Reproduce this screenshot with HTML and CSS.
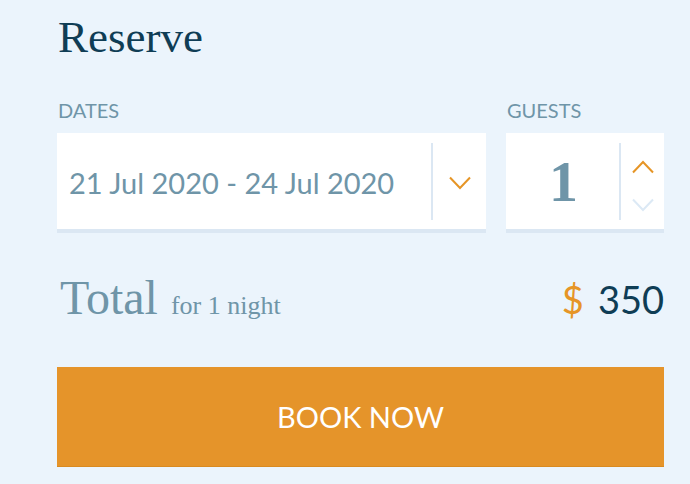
FILE: index.html
```html
<!DOCTYPE html>
<html>
<head>
<meta charset="utf-8">
<link rel="stylesheet" href="styles.css">
</head>
<body>
<div class="card">
  <h1 class="title">Reserve</h1>
  <div class="fields">
    <div class="field dates">
      <div class="label">DATES</div>
      <div class="box">
        <div class="value">21 Jul 2020 - 24 Jul 2020</div>
        <div class="side">
          <svg class="chev" width="22" height="14" viewBox="0 0 22 14"><path d="M1 1.5 L11 12 L21 1.5" fill="none" stroke="#e69526" stroke-width="2"/></svg>
        </div>
      </div>
    </div>
    <div class="field guests">
      <div class="label">GUESTS</div>
      <div class="box">
        <div class="count">1</div>
        <div class="side stepper">
          <svg class="chev" width="22" height="14" viewBox="0 0 22 14"><path d="M1 12.5 L11 2 L21 12.5" fill="none" stroke="#e69526" stroke-width="2"/></svg>
          <svg class="chev" width="22" height="14" viewBox="0 0 22 14"><path d="M1 1.5 L11 12 L21 1.5" fill="none" stroke="#dce9f5" stroke-width="2"/></svg>
        </div>
      </div>
    </div>
  </div>
  <div class="total-row">
    <div class="total"><span class="total-word">Total</span><span class="nights">for 1 night</span></div>
    <div class="price"><span class="currency">$</span><span class="amount">350</span></div>
  </div>
  <button class="book">BOOK NOW</button>
</div>
</body>
</html>
```
FILE: styles.css
```css
html, body {
  margin: 0;
  padding: 0;
  background: #ebf4fc;
}
body {
  font-family: "Lato", "Liberation Sans", sans-serif;
}
.card {
  width: 607px;
  padding: 11px 0 0 57px;
  display: flex;
  flex-direction: column;
}
.title {
  margin: 0 0 0 1px;
  font-family: "Liberation Serif", serif;
  font-weight: normal;
  font-size: 45px;
  line-height: 52px;
  color: #0f3d55;
}
.fields {
  display: flex;
  gap: 20px;
  margin-top: 35px;
}
.field {
  display: flex;
  flex-direction: column;
}
.dates { width: 429px; }
.guests { width: 158px; }
.label {
  font-size: 20px;
  line-height: 24px;
  color: #6f95a8;
  margin-left: 1px;
  margin-bottom: 11px;
}
.box {
  height: 96px;
  background: #fff;
  border-bottom: 4px solid #dbe7f3;
  display: flex;
  align-items: stretch;
}
.value {
  flex: 1;
  display: flex;
  align-items: center;
  padding-left: 12px;
  padding-top: 2px;
  font-size: 29px;
  color: #6f95a8;
}
.side {
  margin: 10px 0 9px;
  border-left: 2px solid #dbe7f3;
  display: flex;
  align-items: center;
  justify-content: center;
}
.chev { display: block; }
.dates .side { width: 53px; padding-top: 2px; }
.count {
  flex: 1;
  display: flex;
  align-items: center;
  justify-content: center;
  font-family: "Liberation Serif", serif;
  font-weight: bold;
  font-size: 58px;
  color: #6f95a8;
  padding-left: 2px;
}
.stepper {
  width: 45px;
  flex-direction: column;
  gap: 24px;
  padding-top: 8px;
  box-sizing: border-box;
}
.total-row {
  display: flex;
  justify-content: space-between;
  align-items: baseline;
  margin-top: 37px;
}
.total-word {
  font-family: "Liberation Serif", serif;
  font-size: 48px;
  color: #6f95a8;
  margin-left: 3px;
}
.nights {
  font-family: "Liberation Serif", serif;
  font-size: 26px;
  color: #6f95a8;
  margin-left: 13px;
}
.price {
  font-size: 38px;
}
.currency {
  color: #e69526;
  margin-right: 14px;
}
.amount {
  color: #0f3d55;
}
.book {
  margin-top: 42px;
  height: 100px;
  border: none;
  border-bottom: 1px solid #d98a20;
  background: #e5942a;
  color: #fff;
  font-family: "Lato", sans-serif;
  font-size: 29px;
  padding: 0;
}
```
